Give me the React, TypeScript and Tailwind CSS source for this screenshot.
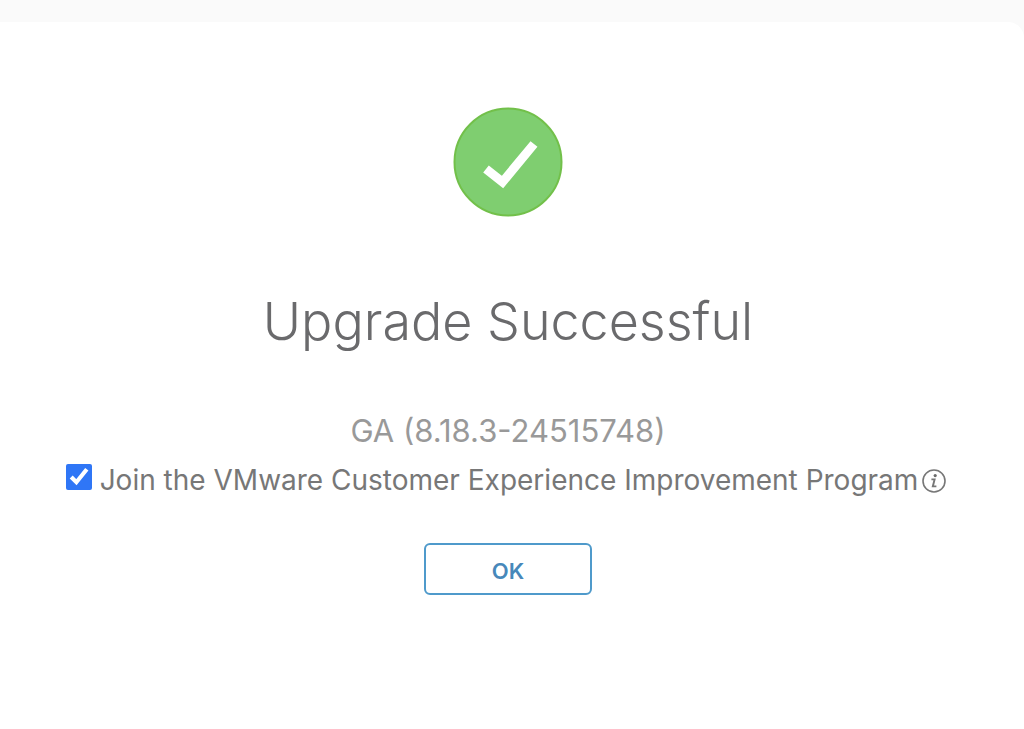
function SuccessIcon() {
    return (
        <svg viewBox="0 0 110 110" className="size-[110px]" aria-hidden="true">
            <circle cx="55" cy="55" r="53.5" fill="#7fce70" stroke="#72c04a" strokeWidth="2" />
            <path d="M33 62L49.5 75L81 37" fill="none" stroke="#fff" strokeWidth="9" />
        </svg>
    );
}

function InfoIcon() {
    return (
        <svg viewBox="0 0 24 24" className="size-6" fill="none" stroke="#777" aria-hidden="true">
            <circle cx="12" cy="12" r="11" strokeWidth="1.6" />
            <circle cx="13.2" cy="6.6" r="1.6" fill="#6b6b6b" stroke="none" />
            <path d="M9.4 10.4H12.6L10.8 17.4H14.4" strokeWidth="1.9" />
        </svg>
    );
}

export default function App() {
    return (
        <div className="min-h-screen bg-[#fafafa] pt-[22px] font-['Inter',sans-serif]">
            <main className="flex min-h-[calc(100vh-22px)] flex-col items-center rounded-tr-2xl bg-white pt-[85px] pr-2">
                <SuccessIcon />
                <h1 className="mt-[75px] text-[52px] leading-[60px] font-light text-[#6a6a6c]">
                    Upgrade Successful
                </h1>
                <p className="mt-[59px] text-[31px] leading-10 text-[#999]">GA (8.18.3-24515748)</p>
                <div className="mt-2 mr-1 flex items-start">
                    <input
                        id="ceip"
                        type="checkbox"
                        defaultChecked
                        className="mt-[5px] mr-2 size-[26px] shrink-0 accent-[#2f76f6]"
                    />
                    <label htmlFor="ceip" className="text-[28px] leading-[42px] whitespace-nowrap text-[#777]">
                        Join the VMware Customer Experience Improvement Program
                    </label>
                    <button type="button" aria-label="Program details" className="mt-[10px] ml-1">
                        <InfoIcon />
                    </button>
                </div>
                <button
                    type="button"
                    className="mt-[42px] h-[52px] w-[168px] rounded-md border-2 border-[#4f9acb] bg-white pt-1 text-[22px] font-semibold text-[#4788ba]"
                >
                    OK
                </button>
            </main>
        </div>
    );
}
